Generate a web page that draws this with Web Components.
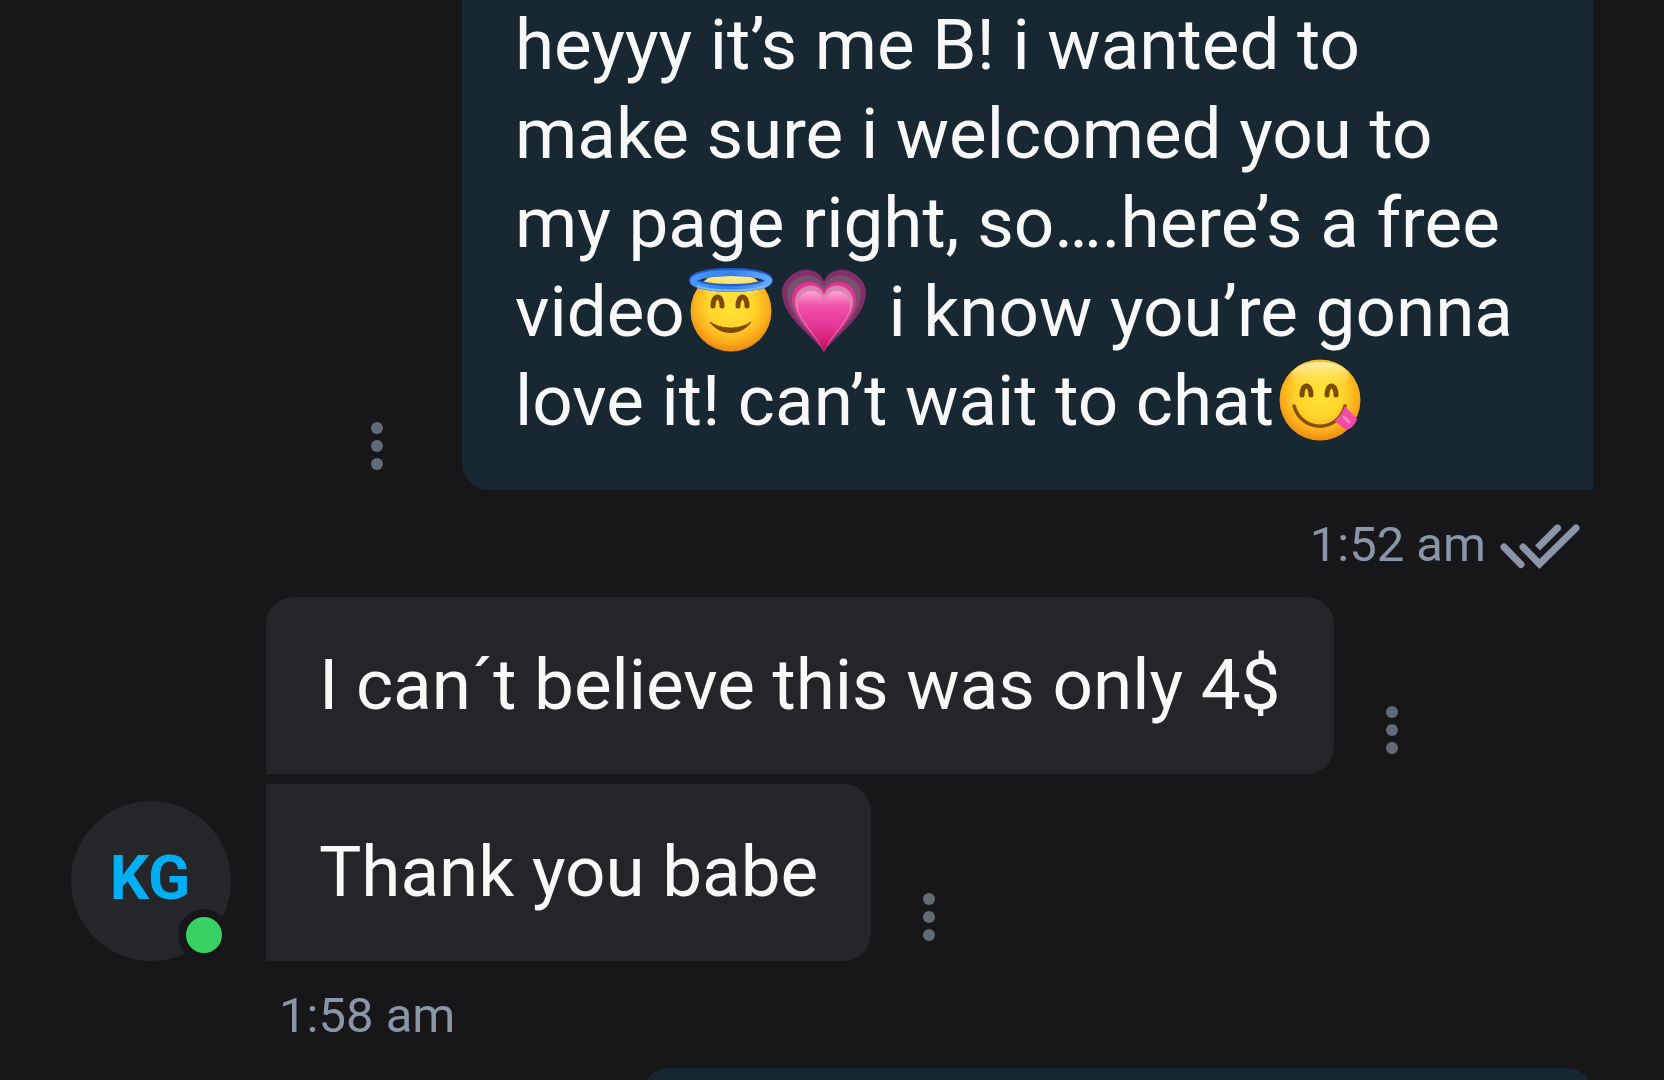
<!DOCTYPE html>
<html lang="en">
<head>
<meta charset="utf-8">
<meta name="viewport" content="width=device-width, initial-scale=1">
<title>Chat</title>
<style>
    body {
        margin: 0;
        background: #171719;
    }
</style>
</head>
<body>
<chat-log>
    <chat-message own continued><span>heyyy it’s me B! i wanted to make sure i welcomed you to my page right, so….here’s a free </span><span>video</span><chat-emoji name="halo"></chat-emoji><chat-emoji name="heart"></chat-emoji><span> i know you’re gonna </span><span>love it! can’t wait to chat</span><chat-emoji name="yum"></chat-emoji></chat-message>
    <message-meta own read>1:52 am</message-meta>
    <message-group>
        <user-avatar slot="avatar" online>KG</user-avatar>
        <chat-message first>I can´t believe this was only 4$</chat-message>
        <chat-message>Thank you babe</chat-message>
        <message-meta slot="meta">1:58 am</message-meta>
    </message-group>
    <chat-message own first media></chat-message>
</chat-log>

<script>
function attach(element, html) {
    const template = document.createElement("template")
    template.innerHTML = html
    element.attachShadow({ mode: "open" })
    element.shadowRoot.appendChild(template.content.cloneNode(true))
}

class ChatLog extends HTMLElement {
    constructor() {
        super()
        attach(this, `
            <style>
            :host {
                display: flex;
                flex-direction: column;
                box-sizing: border-box;
                height: 100vh;
                padding: 0 71px;
                overflow: hidden;
                color: #f8f8f9;
                font-family: Roboto, "Liberation Sans", sans-serif;
                font-size: 71px;
                line-height: 89px;
            }
            ::slotted(*) {
                flex-shrink: 0;
            }
            </style>
            <slot></slot>
        `)
    }
}

class ChatMessage extends HTMLElement {
    constructor() {
        super()
        attach(this, `
            <style>
            :host {
                display: flex;
                align-items: flex-end;
                gap: 36px;
            }
            :host([own]) {
                flex-direction: row-reverse;
                gap: 63px;
            }
            .bubble {
                box-sizing: border-box;
                max-width: 1131px;
                padding: 43px 53px 45px;
                border-radius: 0 27px 27px 0;
                background: #252429;
            }
            :host([first]) .bubble {
                border-top-left-radius: 27px;
            }
            :host([own]) .bubble {
                border-radius: 0 0 0 27px;
                background: #182832;
            }
            :host([own][first]) .bubble {
                border-radius: 27px 27px 0 27px;
            }
            :host([continued]) .bubble {
                padding-top: 0;
            }
            :host([media]) .bubble {
                width: 951px;
                min-height: 480px;
            }
            button {
                display: flex;
                flex-shrink: 0;
                justify-content: center;
                width: 44px;
                margin: 0;
                padding: 0 0 20px;
                border: 0;
                background: none;
                cursor: pointer;
            }
            svg {
                display: block;
                fill: #606b75;
            }
            </style>
            <div class="bubble"><slot></slot></div>
            <button type="button" aria-label="Message options">
                <svg width="12" height="48" viewBox="0 0 12 48">
                    <circle cx="6" cy="6" r="6"/>
                    <circle cx="6" cy="24" r="6"/>
                    <circle cx="6" cy="42" r="6"/>
                </svg>
            </button>
        `)
    }
}

class MessageGroup extends HTMLElement {
    constructor() {
        super()
        attach(this, `
            <style>
            :host {
                display: grid;
                grid-template-columns: 160px 1fr;
                column-gap: 35px;
            }
            .avatar {
                align-self: end;
            }
            .messages {
                display: flex;
                flex-direction: column;
                gap: 10px;
            }
            .meta {
                grid-column: 2;
            }
            </style>
            <div class="avatar"><slot name="avatar"></slot></div>
            <div class="messages"><slot></slot></div>
            <div class="meta"><slot name="meta"></slot></div>
        `)
    }
}

class UserAvatar extends HTMLElement {
    constructor() {
        super()
        attach(this, `
            <style>
            :host {
                display: flex;
                position: relative;
                align-items: center;
                justify-content: center;
                box-sizing: border-box;
                width: 160px;
                height: 160px;
                padding: 0 2px 6px 0;
                border-radius: 50%;
                background: #242629;
                color: #00aff4;
                font-size: 62px;
                font-weight: 700;
                line-height: 72px;
            }
            .status {
                display: none;
                position: absolute;
                right: 1px;
                bottom: 0;
                width: 36px;
                height: 36px;
                border: 8px solid #171719;
                border-radius: 50%;
                background: #38d163;
            }
            :host([online]) .status {
                display: block;
            }
            </style>
            <slot></slot>
            <span class="status"></span>
        `)
    }
}

class MessageMeta extends HTMLElement {
    constructor() {
        super()
        attach(this, `
            <style>
            :host {
                display: flex;
                align-items: center;
                gap: 14px;
                padding: 25px 13px 22px;
                color: #8a96a8;
                font-size: 49px;
                line-height: 60px;
            }
            :host([own]) {
                justify-content: flex-end;
            }
            svg {
                display: none;
                fill: none;
                stroke: currentColor;
                stroke-width: 7;
            }
            :host([read]) svg {
                display: block;
            }
            </style>
            <slot></slot>
            <svg width="80" height="48" viewBox="0 0 80 48" role="img" aria-label="Read">
                <path d="M4 26 21 43.500" stroke-linecap="round"/>
                <path d="M23 26 39.500 43 76 7" stroke-linecap="round"/>
                <path d="M57.500 7 37.500 27"/>
                <circle cx="57.500" cy="7" r="3.500" fill="currentColor" stroke="none"/>
            </svg>
        `)
    }
}

const face = `
    <circle cx="42" cy="43" r="40.500" fill="url(#skin)"/>
    <ellipse cx="42" cy="19" rx="29" ry="14" fill="url(#shine)"/>
`

const eyes = `
    <g fill="none" stroke="#7d4a08" stroke-width="5" stroke-linecap="round">
        <path d="M24 38C24 26 33 26 33 38"/>
        <path d="M49 38C49 26 58 26 58 38"/>
    </g>
`

const emojis = {
    halo: `
        ${face}
        <ellipse cx="42" cy="12" rx="38" ry="8" fill="none" stroke="#1d5ed0" stroke-width="8"/>
        <ellipse cx="42" cy="13" rx="38" ry="8" fill="none" stroke="url(#ring)" stroke-width="6"/>
        <path d="M8 18C23 24 61 24 76 18" fill="none" stroke="#7bb8ff" stroke-width="2"/>
        ${eyes}
        <path d="M21 54C31 68 52 68 62 54C51 62 32 62 21 54Z" fill="#7d4a08" stroke="#7d4a08" stroke-linejoin="round"/>
    `,
    heart: `
        <path d="M42 84C31 67 1 51 0 25C0 5 31-9 42 13C53-9 84 5 84 25C83 51 53 67 42 84Z" fill="#842d69"/>
        <path d="M42 83C32 65 6 49 5 26C5 8 33-1 42 18C51-1 79 8 79 26C78 49 52 65 42 83Z" fill="#75516f"/>
        <path d="M42 83C32 66 11 50 10 32C9 14 34 6 42 23C50 6 75 14 74 32C73 50 52 66 42 83Z" fill="#e53190"/>
        <path d="M42 82C33 66 13 50 13 33C13 18 35 10 42 27C49 10 71 18 71 33C71 50 51 66 42 82Z" fill="#d984b0"/>
        <path d="M42 83C34 65 16 52 16 38C16 20 37 18 42 33C47 18 68 20 68 38C68 52 50 65 42 83Z" fill="url(#love)"/>
    `,
    yum: `
        ${face}
        ${eyes}
        <path d="M16 49C24 76 60 76 67 49" fill="none" stroke="#85500b" stroke-width="3.500" stroke-linecap="round"/>
        <path d="M67 51 78 62C75 69 72 72 67 71L58 64C63 60 66 56 67 51Z" fill="#f14ba5" stroke="#f14ba5" stroke-width="2" stroke-linejoin="round"/>
        <path d="M66 60 71 65" fill="none" stroke="#ff85c5" stroke-width="3" stroke-linecap="round"/>
    `
}

const emojiLabels = {
    halo: "smiling face with halo",
    heart: "growing heart",
    yum: "face savoring food"
}

class ChatEmoji extends HTMLElement {
    constructor() {
        super()
        const name = this.getAttribute("name")
        attach(this, `
            <style>
            :host {
                display: inline-block;
                width: 84px;
                height: 84px;
                margin: 0 5px 0 4px;
                vertical-align: -16px;
            }
            svg {
                display: block;
                overflow: visible;
            }
            </style>
            <svg width="84" height="84" viewBox="0 0 84 84" role="img" aria-label="${emojiLabels[name]}">
                <defs>
                    <radialGradient id="skin" cx="50%" cy="42%" r="58%">
                        <stop offset="0" stop-color="#ffe536"/>
                        <stop offset="0.5" stop-color="#ffd42b"/>
                        <stop offset="0.8" stop-color="#fcae1c"/>
                        <stop offset="1" stop-color="#e98a12"/>
                    </radialGradient>
                    <linearGradient id="shine" x2="0" y2="1">
                        <stop offset="0" stop-color="#fff7c4" stop-opacity="0.9"/>
                        <stop offset="1" stop-color="#ffe33a" stop-opacity="0"/>
                    </linearGradient>
                    <linearGradient id="ring">
                        <stop offset="0" stop-color="#4b96f8"/>
                        <stop offset="0.5" stop-color="#347fe9"/>
                        <stop offset="1" stop-color="#66a9ff"/>
                    </linearGradient>
                    <linearGradient id="love" x2="0" y2="1">
                        <stop offset="0" stop-color="#ffa5d2"/>
                        <stop offset="0.25" stop-color="#f152a9"/>
                        <stop offset="0.55" stop-color="#e8389b"/>
                        <stop offset="1" stop-color="#c30f55"/>
                    </linearGradient>
                </defs>
                ${emojis[name]}
            </svg>
        `)
    }
}

window.customElements.define("chat-log", ChatLog)
window.customElements.define("chat-message", ChatMessage)
window.customElements.define("message-group", MessageGroup)
window.customElements.define("user-avatar", UserAvatar)
window.customElements.define("message-meta", MessageMeta)
window.customElements.define("chat-emoji", ChatEmoji)
</script>
</body>
</html>
